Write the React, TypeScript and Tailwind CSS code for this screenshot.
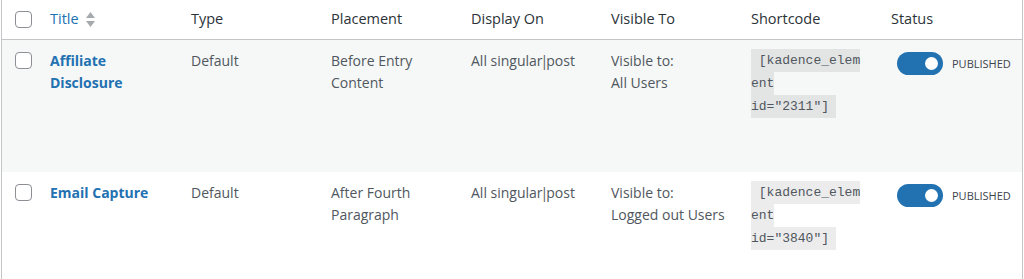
import React from "react";

type Row = {
  title: string[];
  placement: string[];
  visible: string[];
  id: string;
  bg: string;
  h: string;
};

const rows: Row[] = [
  {
    title: ["Affiliate", "Disclosure"],
    placement: ["Before Entry", "Content"],
    visible: ["Visible to:", "All Users"],
    id: "2311",
    bg: "bg-[#f6f7f7]",
    h: "h-[132px]",
  },
  {
    title: ["Email Capture"],
    placement: ["After Fourth", "Paragraph"],
    visible: ["Visible to:", "Logged out Users"],
    id: "3840",
    bg: "bg-white",
    h: "h-[120px]",
  },
];

function Checkbox() {
  return (
    <div className="w-[17px] h-[17px] rounded-[4px] border border-[#8c8f94] bg-white" />
  );
}

function SortIcon() {
  return (
    <svg width="9" height="15" viewBox="0 0 9 15" className="ml-[7px]">
      <path d="M4.5 0 L9 6 L0 6 Z" fill="#a7aaad" />
      <path d="M0 9 L9 9 L4.5 15 Z" fill="#a7aaad" />
    </svg>
  );
}

function Toggle() {
  return (
    <div className="relative w-[46px] h-[23px] rounded-full bg-[#2271b1]">
      <div className="absolute right-[5px] top-[5px] w-[13px] h-[13px] rounded-full bg-white" />
    </div>
  );
}

export default function App() {
  const head = "text-[14.5px] leading-[21.5px] text-[#2c3338] pl-[10px] pt-[8px]";
  const cell = "text-[14px] leading-[21.5px] text-[#50575e] pl-[10px] pt-[10px]";
  return (
    <div className="bg-white min-h-[279px] font-['Open_Sans',sans-serif]">
      <div className="ml-[1px] w-[1022px] border-x border-[#c3c4c7]">
        {/* header */}
        <div className="flex h-[40px] border-b border-[#c3c4c7] bg-white">
          <div className="w-[38px] pl-[13px] pt-[11px]">
            <Checkbox />
          </div>
          <div className={`w-[141px] ${head} flex items-start`}>
            <span className="text-[#2271b1]">Title</span>
            <div className="mt-[4px]">
              <SortIcon />
            </div>
          </div>
          <div className={`w-[140px] ${head}`}>Type</div>
          <div className={`w-[140px] ${head}`}>Placement</div>
          <div className={`w-[140px] ${head}`}>Display On</div>
          <div className={`w-[140px] ${head}`}>Visible To</div>
          <div className={`w-[140px] ${head}`}>Shortcode</div>
          <div className={`w-[141px] ${head}`}>Status</div>
        </div>
        {rows.map((r) => (
          <div key={r.id} className={`flex ${r.h} ${r.bg}`}>
            <div className="w-[38px] pl-[13px] pt-[12px]">
              <Checkbox />
            </div>
            <div className={`w-[141px] ${cell}`}>
              {r.title.map((t) => (
                <div key={t} className="font-bold text-[#2271b1]">
                  {t}
                </div>
              ))}
            </div>
            <div className={`w-[140px] ${cell}`}>Default</div>
            <div className={`w-[140px] ${cell}`}>
              {r.placement.map((t) => (
                <div key={t}>{t}</div>
              ))}
            </div>
            <div className={`w-[140px] ${cell}`}>
              All singular<span className="mx-[-2px]">|</span>post
            </div>
            <div className={`w-[140px] ${cell}`}>
              {r.visible.map((t) => (
                <div key={t}>{t}</div>
              ))}
            </div>
            <div className="w-[140px] pl-[10px] pt-[9px] font-['Liberation_Mono',monospace] text-[13px] leading-[23px] text-[#50575e]">
              <div>
                <span className="inline-block bg-black/[0.075] whitespace-pre">{" [kadence_elem"}</span>
              </div>
              <div>
                <span className="inline-block bg-black/[0.075] whitespace-pre">ent</span>
              </div>
              <div>
                <span className="inline-block bg-black/[0.075] whitespace-pre pr-[7px]">{`id="${r.id}"]`}</span>
              </div>
            </div>
            <div className="w-[141px] pl-[16px] pt-[12px] flex items-start">
              <Toggle />
              <span className="ml-[9px] mt-[3px] text-[11px] leading-[17px] text-[#3c434a] uppercase">
                Published
              </span>
            </div>
          </div>
        ))}
      </div>
    </div>
  );
}
